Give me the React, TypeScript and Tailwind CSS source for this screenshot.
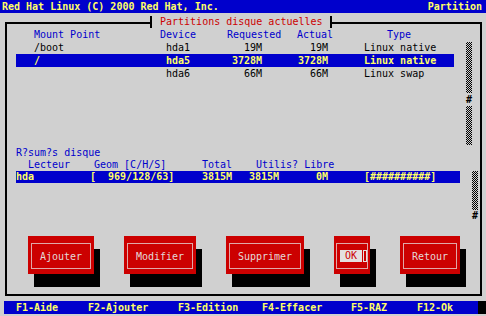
const checker =
  "bg-[image:repeating-conic-gradient(#000_0%_25%,#d0d0d0_0%_50%)] bg-[length:2px_2px]";

const partitions = [
  { mount: "/boot", device: "hda1", req: "19M", actual: "19M", type: "Linux native", sel: false },
  { mount: "/", device: "hda5", req: "3728M", actual: "3728M", type: "Linux native", sel: true },
  { mount: "", device: "hda6", req: "66M", actual: "66M", type: "Linux swap", sel: false },
];

function Button({ label, width }: { label: string; width: string }) {
  return (
    <div className={`h-[38px] bg-[#cc0000] shadow-[6px_13px_0_0_#000] pt-[7px] pb-[5px] px-[3px] ${width}`}>
      <div className="h-full border border-[#e0a8a8] flex items-center justify-center text-[#e4d8d8]">
        {label}
      </div>
    </div>
  );
}

export default function App() {
  return (
    <div className="w-[486px] h-[316px] bg-[#d0d0d0] overflow-hidden flex flex-col text-[10px] text-black font-['DejaVu_Sans_Mono',monospace] whitespace-pre">
      {/* top line */}
      <div className="h-[13px] shrink-0 bg-[#0000cc] flex justify-between px-[2px] leading-[13px] font-bold text-[#ffff66]">
        <span>Red Hat Linux (C) 2000 Red Hat, Inc.</span>
        <span className="pr-[2px]">Partition</span>
      </div>

      {/* window */}
      <div className="relative shrink-0 mt-[9px] ml-[5px] w-[477px] h-[274px] border-2 border-black">
        <div className="absolute left-[143px] top-[-8px] h-[12px] leading-[12px] border-x-2 border-black bg-[#d0d0d0] pl-[8px] pr-[7px] text-[#cc0000]">
          Partitions disque actuelles
        </div>

        {/* partitions list */}
        <div className="flex h-[123px]">
          <div className="ml-[9px] w-[438px] pt-[4px]">
            <div className="flex h-[13px] leading-[13px] text-[#0000cc]">
              <span className="w-[144px] pl-[18px]">Mount Point</span>
              <span className="w-[67px]">Device</span>
              <span className="w-[70px]">Requested</span>
              <span className="w-[90px]">Actual</span>
              <span>Type</span>
            </div>
            {partitions.map((p) => (
              <div
                key={p.device}
                className={`flex h-[13px] leading-[13px] ${p.sel ? "bg-[#0000cc] text-[#ffff66] font-bold" : ""}`}
              >
                <span className="w-[150px] pl-[18px]">{p.mount}</span>
                <span className="w-[60px]">{p.device}</span>
                <span className="w-[36px] text-right">{p.req}</span>
                <span className="w-[66px] text-right">{p.actual}</span>
                <span className="pl-[36px]">{p.type}</span>
              </div>
            ))}
          </div>
          <div className="ml-[12px] mt-[18px] w-[6px] flex flex-col">
            <div className={`h-[51px] ${checker}`} />
            <div className="h-[13px] leading-[13px] font-bold text-center">#</div>
            <div className={`h-[39px] ${checker}`} />
          </div>
        </div>

        {/* disk summary */}
        <div className="flex h-[89px]">
          <div className="ml-[9px] w-[444px]">
            <div className="h-[12px] leading-[12px] text-[#0000cc]">R?sum?s disque</div>
            <div className="flex h-[12px] leading-[12px] text-[#0000cc]">
              <span className="w-[78px] pl-[12px]">Lecteur</span>
              <span className="w-[108px]">Geom [C/H/S]</span>
              <span className="w-[54px]">Total</span>
              <span>Utilis? Libre</span>
            </div>
            <div className="flex h-[12px] leading-[12px] bg-[#0000cc] text-[#ffff66] font-bold">
              <span className="w-[74px]">hda</span>
              <span className="w-[112px]">[  969/128/63]</span>
              <span className="w-[47px]">3815M</span>
              <span className="w-[67px]">3815M</span>
              <span className="w-[48px]">0M</span>
              <span>[##########]</span>
            </div>
          </div>
          <div className="ml-[12px] mt-[24px] w-[6px] flex flex-col">
            <div className={`h-[39px] ${checker}`} />
            <div className="h-[12px] leading-[12px] font-bold text-center">#</div>
          </div>
        </div>

        {/* buttons */}
        <div className="flex pl-[21px] gap-[30px]">
          <Button label="Ajouter" width="w-[66px]" />
          <Button label="Modifier" width="w-[72px]" />
          <Button label="Supprimer" width="w-[78px]" />
          <div className="w-[36px] h-[38px] bg-[#cc0000] shadow-[6px_13px_0_0_#000] pt-[7px] pb-[5px] px-[2px]">
            <div className="h-full border border-[#e0a8a8] flex items-center pl-[3px]">
              <span className="w-[24px] h-[12px] leading-[12px] bg-[#e4e0e0] text-[#cc0000] text-center">OK</span>
              <span className="ml-[1px] w-[4px] h-[12px] border border-[#e4e0e0]" />
            </div>
          </div>
          <Button label="Retour" width="w-[60px]" />
        </div>
      </div>

      {/* key help */}
      <div className="mt-[5px] h-[13px] shrink-0 flex">
        <div className="ml-[4px] w-[474px] bg-[#0000cc] flex pl-[12px] leading-[13px] font-bold text-[#ffff66]">
          <span className="w-[72px]">F1-Aide</span>
          <span className="w-[90px]">F2-Ajouter</span>
          <span className="w-[84px]">F3-Edition</span>
          <span className="w-[89px]">F4-Effacer</span>
          <span className="w-[66px]">F5-RAZ</span>
          <span>F12-Ok</span>
        </div>
        <div className="flex-1 bg-black" />
      </div>
    </div>
  );
}
